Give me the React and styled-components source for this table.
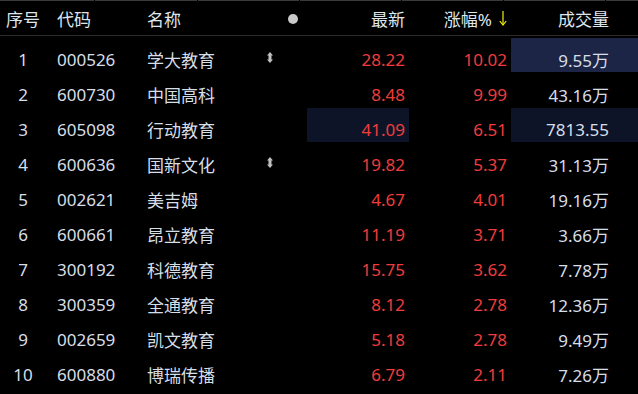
import React from "react";
import styled, {createGlobalStyle} from "styled-components";

const GlobalStyle = createGlobalStyle`
    html, body {
        margin: 0;
        padding: 0;
        background: #000;
    }
    body {
        font-family: "Noto Sans", "Noto Sans CJK SC", sans-serif;
        -webkit-font-smoothing: antialiased;
    }
`;

const rows = [
    {no: 1, code: "000526", name: "学大教育", flag: true, price: "28.22", pct: "10.02", vol: "9.55万", hl: {vol: "strong"}},
    {no: 2, code: "600730", name: "中国高科", price: "8.48", pct: "9.99", vol: "43.16万"},
    {no: 3, code: "605098", name: "行动教育", price: "41.09", pct: "6.51", vol: "7813.55", hl: {price: "soft", vol: "soft"}},
    {no: 4, code: "600636", name: "国新文化", flag: true, price: "19.82", pct: "5.37", vol: "31.13万"},
    {no: 5, code: "002621", name: "美吉姆", price: "4.67", pct: "4.01", vol: "19.16万"},
    {no: 6, code: "600661", name: "昂立教育", price: "11.19", pct: "3.71", vol: "3.66万"},
    {no: 7, code: "300192", name: "科德教育", price: "15.75", pct: "3.62", vol: "7.78万"},
    {no: 8, code: "300359", name: "全通教育", price: "8.12", pct: "2.78", vol: "12.36万"},
    {no: 9, code: "002659", name: "凯文教育", price: "5.18", pct: "2.78", vol: "9.49万"},
    {no: 10, code: "600880", name: "博瑞传播", price: "6.79", pct: "2.11", vol: "7.26万"},
];

const topSegments = [94, 102, 101, 101, 101, 101, 34];

const SortIcon = () => (
    <svg width="6" height="11" viewBox="0 0 6 11">
        <polygon points="3,0 6,3.5 0,3.5" fill="#c0c0c0"/>
        <rect x="1.5" y="3" width="3" height="5" fill="#c0c0c0"/>
        <polygon points="3,11 6,7.5 0,7.5" fill="#c0c0c0"/>
    </svg>
);

const DownArrow = () => (
    <svg width="8" height="16" viewBox="0 0 8 16">
        <line x1="4" y1="1" x2="4" y2="15" stroke="#eeee10" strokeWidth="1.2"/>
        <polyline points="0.8,11 4,15 7.2,11" fill="none" stroke="#eeee10" strokeWidth="1.2"/>
    </svg>
);

const App = () => {
    return (
        <Screen>
            <GlobalStyle/>
            <TopRule>
                {topSegments.map((w, i) => <TopSegment key={i} style={{width: w}}/>)}
            </TopRule>
            <HeaderRow>
                <HeadCell align="center">序号</HeadCell>
                <HeadCell pad="11px">代码</HeadCell>
                <HeadCell>名称</HeadCell>
                <HeadCell><Dot/></HeadCell>
                <HeadCell align="right">最新</HeadCell>
                <HeadCell align="right">涨幅%<ArrowWrap><DownArrow/></ArrowWrap></HeadCell>
                <HeadCell align="right" padRight="29px">成交量</HeadCell>
            </HeaderRow>
            <Body>
                {rows.map(r => (
                    <Row key={r.no}>
                        <Cell align="center">{r.no}</Cell>
                        <Cell pad="11px">{r.code}</Cell>
                        <Cell>{r.name}</Cell>
                        <Cell pad="5px">{r.flag && <IconWrap><SortIcon/></IconWrap>}</Cell>
                        <Cell align="right" tone="red" hl={r.hl?.price}>{r.price}</Cell>
                        <Cell align="right" tone="red">{r.pct}</Cell>
                        <Cell align="right" padRight="29px" hl={r.hl?.vol}>{r.vol}</Cell>
                    </Row>
                ))}
            </Body>
        </Screen>
    );
};

export default App;

const columns = "46px 101px 115px 45px 102px 102px 1fr";

const Screen = styled.div`
    width: 638px;
    height: 394px;
    background: #000;
    overflow: hidden;
    color: #dbe3ec;
    font-size: 17px;
`;

const TopRule = styled.div`
    display: flex;
    gap: 1px;
    height: 1px;
`;

const TopSegment = styled.div`
    height: 1px;
    background: #3a3a3a;
    flex-shrink: 0;
`;

const HeaderRow = styled.div`
    display: grid;
    grid-template-columns: ${columns};
    height: 34px;
    border-bottom: 1px solid #2c2c2c;
`;

const HeadCell = styled.div`
    display: flex;
    align-items: center;
    justify-content: ${p => p.align === "right" ? "flex-end" : p.align === "center" ? "center" : "flex-start"};
    padding-left: ${p => p.pad || "0"};
    padding-right: ${p => p.padRight || (p.align === "right" ? "4px" : "0")};
    padding-top: 1px;
    color: #dfe6ee;
    white-space: nowrap;
`;

const Dot = styled.span`
    width: 10px;
    height: 10px;
    border-radius: 50%;
    background: #c9c9c9;
    margin-left: 26px;
`;

const ArrowWrap = styled.span`
    display: flex;
    margin-left: 7px;
    margin-top: -1px;
`;

const Body = styled.div`
    padding-top: 2px;
`;

const Row = styled.div`
    display: grid;
    grid-template-columns: ${columns};
    height: 35px;
`;

const Cell = styled.div`
    display: flex;
    align-items: center;
    justify-content: ${p => p.align === "right" ? "flex-end" : p.align === "center" ? "center" : "flex-start"};
    box-sizing: border-box;
    height: 34px;
    padding-top: 8px;
    padding-left: ${p => p.pad || "0"};
    padding-right: ${p => p.padRight || (p.align === "right" ? "4px" : "0")};
    color: ${p => p.tone === "red" ? "#f03c3c" : "#d6dee8"};
    background: ${p => p.hl === "strong" ? "#1c2546" : p.hl === "soft" ? "#0e1428" : "transparent"};
    white-space: nowrap;
`;

const IconWrap = styled.span`
    display: flex;
    margin-top: -4px;
`;
